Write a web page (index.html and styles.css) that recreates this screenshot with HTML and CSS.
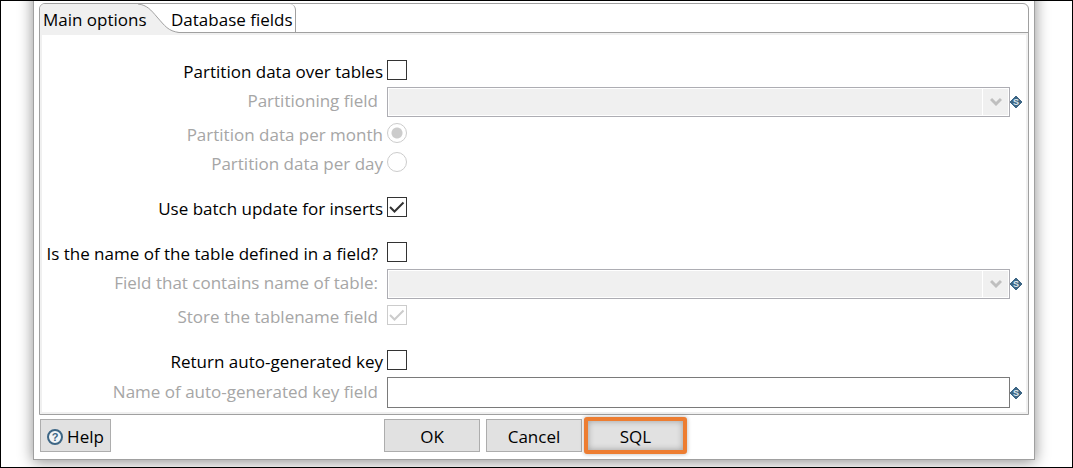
FILE: index.html
```html
<!DOCTYPE html>
<html lang="en">
<head>
<meta charset="utf-8">
<title>Table output</title>
<link rel="stylesheet" href="styles.css">
</head>
<body>
<main class="frame">
  <form class="dialog">
    <section class="folder">
      <div class="tabs" role="tablist">
        <svg class="tab-shape" width="144" height="29" viewBox="0 0 144 29" aria-hidden="true">
          <path d="M0 29 V0 H98 C107 1 111 6 117 13 C125 22 128 27 139 28.500 L144 29 Z" fill="#f0f0f0"/>
          <path d="M98 0 C107 1 111 6 117 13 C125 22 128 27 139 28.500 H144" fill="none" stroke="#a0a0a0"/>
        </svg>
        <button class="tab tab-active" type="button" role="tab" aria-selected="true">Main options</button>
        <button class="tab tab-last" type="button" role="tab" aria-selected="false">Database fields</button>
      </div>
      <div class="panel" role="tabpanel">
        <div class="group">
          <div class="row">
            <label class="label" for="partition">Partition data over tables</label>
            <input class="check" type="checkbox" id="partition">
          </div>
          <div class="row row-field">
            <label class="label label-inset label-off" for="partition-field">Partitioning field</label>
            <div class="field">
              <select class="combo" id="partition-field" disabled><option></option></select>
              <span class="arrow"><svg width="12" height="10" viewBox="0 0 12 10"><path d="M1 2 L6 7 L11 2" fill="none" stroke="#bfbfbf" stroke-width="3"/></svg></span>
            </div>
            <svg class="variable" width="12" height="12" viewBox="0 0 12 12"><path d="M6 0 L12 6 L6 12 L0 6 Z"/><text x="6" y="9" text-anchor="middle" class="variable-letter">S</text></svg>
          </div>
          <div class="row">
            <label class="label label-off" for="per-month">Partition data per month</label>
            <input class="radio" type="radio" name="per" id="per-month" checked disabled>
          </div>
          <div class="row row-loose">
            <label class="label label-off" for="per-day">Partition data per day</label>
            <input class="radio" type="radio" name="per" id="per-day" disabled>
          </div>
        </div>
        <div class="group">
          <div class="row">
            <label class="label" for="batch">Use batch update for inserts</label>
            <span class="tickbox">
              <input class="check" type="checkbox" id="batch" checked>
              <svg class="tick" width="20" height="20" viewBox="0 0 20 20"><path d="M3 10 L7.500 14.500 L16.500 5.500"/></svg>
            </span>
          </div>
        </div>
        <div class="group">
          <div class="row">
            <label class="label label-inset" for="in-field">Is the name of the table defined in a field?</label>
            <input class="check" type="checkbox" id="in-field">
          </div>
          <div class="row row-field">
            <label class="label label-inset label-off" for="table-field">Field that contains name of table:</label>
            <div class="field">
              <select class="combo" id="table-field" disabled><option></option></select>
              <span class="arrow"><svg width="12" height="10" viewBox="0 0 12 10"><path d="M1 2 L6 7 L11 2" fill="none" stroke="#bfbfbf" stroke-width="3"/></svg></span>
            </div>
            <svg class="variable" width="12" height="12" viewBox="0 0 12 12"><path d="M6 0 L12 6 L6 12 L0 6 Z"/><text x="6" y="9" text-anchor="middle" class="variable-letter">S</text></svg>
          </div>
          <div class="row">
            <label class="label label-inset label-off" for="store">Store the tablename field</label>
            <span class="tickbox">
              <input class="check" type="checkbox" id="store" checked disabled>
              <svg class="tick tick-off" width="20" height="20" viewBox="0 0 20 20"><path d="M3 10 L7.500 14.500 L16.500 5.500"/></svg>
            </span>
          </div>
        </div>
        <div class="group">
          <div class="row">
            <label class="label" for="return-key">Return auto-generated key</label>
            <input class="check" type="checkbox" id="return-key">
          </div>
          <div class="row row-field">
            <label class="label label-inset label-off" for="key-field">Name of auto-generated key field</label>
            <input class="textbox" type="text" id="key-field">
            <svg class="variable" width="12" height="12" viewBox="0 0 12 12"><path d="M6 0 L12 6 L6 12 L0 6 Z"/><text x="6" y="9" text-anchor="middle" class="variable-letter">S</text></svg>
          </div>
        </div>
      </div>
    </section>
    <footer class="actions">
      <button class="button button-help" type="button">
        <svg width="16" height="16" viewBox="0 0 16 16" aria-hidden="true">
          <circle cx="8" cy="8" r="7" fill="#f2f5f7" stroke="#3d6685" stroke-width="2"/>
          <text x="8" y="12" text-anchor="middle" class="help-mark">?</text>
        </svg>
        <span>Help</span>
      </button>
      <div class="choices">
        <button class="button" type="button">OK</button>
        <button class="button" type="button">Cancel</button>
        <button class="button button-marked" type="button">SQL</button>
      </div>
    </footer>
  </form>
</main>
</body>
</html>
```
FILE: styles.css
```css
* { box-sizing: border-box; }

body {
  margin: 0;
  background: #fff;
  color: #000;
  font: 17px/24px "Open Sans", "Noto Sans", sans-serif;
}

button, input, select { font: inherit; color: inherit; margin: 0; }
svg { display: block; flex: none; }

.frame {
  min-height: 100vh;
  overflow: hidden;
  padding: 0 37px 7px 32px;
  border: 1px solid #000;
}

.dialog {
  margin-top: -20px;
  padding: 21px 5px 5px;
  border: 1px solid #a0a0a0;
  box-shadow: 0 2px 14px rgba(0, 0, 0, 0.45);
  background: #fff;
}

.folder {
  border: 1px solid #a0a0a0;
  border-radius: 6px 6px 0 0;
}

.tabs {
  position: relative;
  display: flex;
  height: 29px;
  border-bottom: 1px solid #a0a0a0;
}

.tab-shape {
  position: absolute;
  top: 0;
  left: 0;
  border-top-left-radius: 5px;
}

.tab {
  position: relative;
  height: 28px;
  padding: 2px 3px 0;
  border: 0;
  background: none;
  line-height: 28px;
  white-space: nowrap;
}

.tab-active { width: 128px; text-align: left; }

.tab-last {
  width: 128px;
  border-right: 1px solid #a0a0a0;
  border-top-right-radius: 6px;
}

.panel {
  display: flex;
  flex-direction: column;
  gap: 25px;
  padding: 25px 4px 4px 0;
  border: 2px solid #f0f0f0;
}

.row {
  display: grid;
  grid-template-columns: 341px 20px;
  column-gap: 4px;
  align-items: center;
  min-height: 20px;
}

.row + .row { margin-top: 6px; }
.row + .row-field { margin-top: 7px; }
.row + .row-loose { margin-top: 9px; }
.row-field { grid-template-columns: 341px 1fr 12px; column-gap: 0; }

.label {
  line-height: 22px;
  margin-bottom: -4px;
  text-align: right;
  white-space: nowrap;
}
.label-inset { padding-right: 5px; }
.label-off { color: #a6a6a6; }
.row-field .label { margin-bottom: 2px; }

.check, .radio {
  display: block;
  appearance: none;
  width: 20px;
  height: 20px;
  border: 1px solid #333;
  background: #fff;
}
.check:disabled { border-color: #ccc; }
.radio { border-color: #ccc; border-radius: 50%; }
.radio:checked { background: radial-gradient(circle, #ccc 5px, #fff 6px); }

.tickbox { position: relative; }
.tick {
  position: absolute;
  top: 0;
  left: 0;
  fill: none;
  stroke: #333;
  stroke-width: 2;
  pointer-events: none;
}
.tick-off { stroke: #ccc; }

.field { position: relative; margin-left: 4px; }
.combo {
  display: block;
  appearance: none;
  width: 100%;
  height: 30px;
  border: 1px solid #adadb3;
  border-radius: 0;
  background: #f0f0f0;
  box-shadow: inset 0 0 0 1px #fff;
  opacity: 1;
}
.arrow {
  position: absolute;
  top: 1px;
  right: 1px;
  bottom: 1px;
  display: grid;
  place-items: center;
  width: 27px;
  border-left: 1px solid #fff;
  pointer-events: none;
}

.textbox {
  width: auto;
  min-width: 0;
  height: 31px;
  margin-left: 4px;
  border: 1px solid #7a7a7a;
  background: #fff;
}

.variable {
  overflow: visible;
  fill: #3d6685;
  stroke: #3d6685;
  stroke-linejoin: round;
}
.variable-letter {
  font: bold 9px "Liberation Sans", sans-serif;
  fill: #dfe8ee;
  stroke: none;
}
.help-mark { font: bold 11px "Liberation Sans", sans-serif; fill: #3d6685; }

.actions {
  display: grid;
  grid-template-columns: 1fr auto 1fr;
  align-items: center;
  margin-top: 2px;
}

.choices { display: flex; align-items: center; gap: 6px; }

.button {
  width: 96px;
  height: 33px;
  padding: 2px 0 0;
  border: 1px solid #adadad;
  background: #e1e1e1;
}

.button-help {
  display: flex;
  align-items: center;
  justify-content: center;
  gap: 4px;
  width: 71px;
  margin-left: 1px;
}

.button-marked {
  width: 103px;
  height: 37px;
  margin: 0 -3px 0 -4px;
  border: 4px solid #ed7d31;
  border-radius: 3px;
  box-shadow: 0 0 4px rgba(0, 0, 0, 0.3), inset 0 0 6px rgba(0, 0, 0, 0.3);
}
```
